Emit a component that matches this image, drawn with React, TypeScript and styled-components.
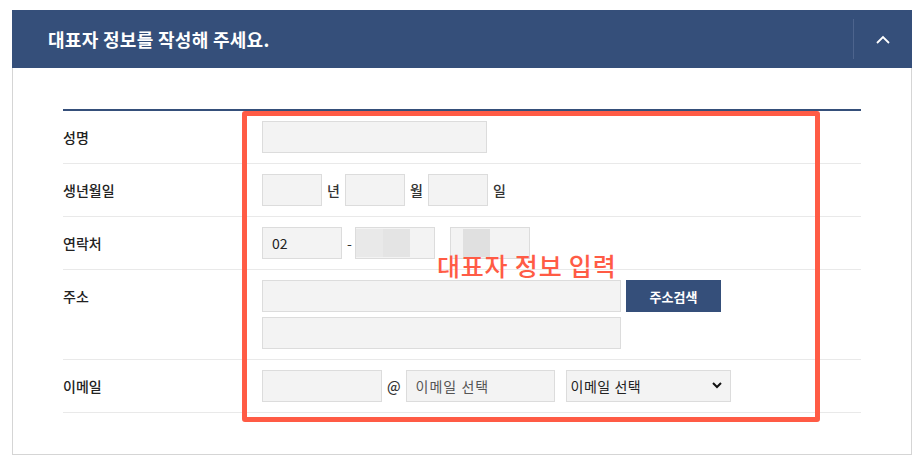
import React from "react";
import styled, { createGlobalStyle } from "styled-components";

const Global = createGlobalStyle`
  html, body { margin: 0; padding: 0; background: #ffffff; }
  body { font-family: "Noto Sans CJK KR", "Noto Sans", sans-serif; color: #333; }
  * { box-sizing: border-box; }
`;

const Page = styled.div`
  padding: 10px 9px 10px 12px;
  width: 921px;
`;

const Card = styled.section`
  width: 900px;
`;

const Header = styled.header`
  height: 58px;
  background: #354f7a;
  display: flex;
  align-items: center;
  padding-left: 36px;
`;

const Title = styled.h2`
  flex: 1;
  margin: 0;
  color: #fff;
  font-size: 18px;
  font-weight: 700;
  letter-spacing: 0.3px;
`;

const Toggle = styled.button`
  width: 59px;
  height: 40px;
  border: none;
  border-left: 1px solid #4d648d;
  background: transparent;
  display: flex;
  align-items: center;
  justify-content: center;
  padding: 0;
`;

const Body = styled.div`
  position: relative;
  border: 1px solid #d5d5d5;
  border-top: none;
  padding: 41px 50px 41px 50px;
`;

const Table = styled.div`
  border-top: 2px solid #354f7a;
`;

const Row = styled.div`
  display: grid;
  grid-template-columns: 199px 1fr;
  padding: 10px 0;
  border-bottom: 1px solid #e9e9e9;
`;

const Label = styled.div`
  align-self: start;
  line-height: 32px;
  font-size: 14px;
  font-weight: 500;
  color: #222;
`;

const Fields = styled.div`
  display: flex;
  flex-direction: column;
  gap: 5px;
`;

const Line = styled.div`
  display: flex;
  align-items: center;
  gap: 5px;
`;

const Input = styled.input<{ $w: number }>`
  width: ${(p) => p.$w}px;
  height: 32px;
  background: #f3f3f3;
  border: 1px solid #dcdcdc;
  padding: 0 9px;
  font-family: "Noto Sans CJK KR", sans-serif;
  font-size: 14px;
  color: #222;
  outline: none;
  &::placeholder { color: #555; letter-spacing: 1px; }
`;

const MaskBox = styled.div<{ $w: number }>`
  width: ${(p) => p.$w}px;
  height: 32px;
  background: #f3f3f3;
  border: 1px solid #dcdcdc;
  display: flex;
  align-items: center;
`;

const Blur = styled.span<{ $w: number; $c: string; $ml?: number }>`
  display: block;
  width: ${(p) => p.$w}px;
  height: 28px;
  margin-left: ${(p) => p.$ml ?? 0}px;
  background: ${(p) => p.$c};
`;

const Unit = styled.span`
  font-size: 14px;
  font-weight: 500;
  color: #333;
  min-width: 13px;
`;

const Dash = styled.span<{ $w: number }>`
  width: ${(p) => p.$w}px;
  font-size: 14px;
  color: #333;
`;

const SearchButton = styled.button`
  width: 95px;
  height: 32px;
  background: #354f7a;
  color: #fff;
  border: none;
  font-family: "Noto Sans CJK KR", sans-serif;
  font-size: 13px;
  font-weight: 700;
`;

const SelectWrap = styled.div`
  position: relative;
  margin-left: 6px;
`;

const Select = styled.select`
  appearance: none;
  width: 165px;
  height: 32px;
  background: #f3f3f3;
  border: 1px solid #dcdcdc;
  padding: 0 4px;
  font-family: "Noto Sans CJK KR", sans-serif;
  font-size: 14px;
  color: #222;
  letter-spacing: 0.5px;
  outline: none;
`;

const Caret = styled.svg`
  position: absolute;
  right: 9px;
  top: 12px;
  pointer-events: none;
`;

const Highlight = styled.div`
  position: absolute;
  left: 229px;
  top: 43px;
  width: 578px;
  height: 311px;
  border: 5px solid #ff5b45;
  border-radius: 3px;
  pointer-events: none;
`;

const Annotation = styled.div`
  position: absolute;
  left: 424px;
  top: 182px;
  font-size: 25px;
  font-weight: 500;
  line-height: 30px;
  color: #ff5b45;
  letter-spacing: 0.8px;
  pointer-events: none;
`;

export default function App() {
  return (
    <Page>
      <Global />
      <Card>
        <Header>
          <Title>대표자 정보를 작성해 주세요.</Title>
          <Toggle aria-label="접기">
            <svg width="14" height="9" viewBox="0 0 14 9">
              <polyline points="1,8 7,2 13,8" fill="none" stroke="#fff" strokeWidth="1.8" />
            </svg>
          </Toggle>
        </Header>
        <Body>
          <Table>
            <Row>
              <Label>성명</Label>
              <Fields>
                <Line>
                  <Input $w={225} />
                </Line>
              </Fields>
            </Row>
            <Row>
              <Label>생년월일</Label>
              <Fields>
                <Line>
                  <Input $w={60} />
                  <Unit>년</Unit>
                  <Input $w={60} />
                  <Unit>월</Unit>
                  <Input $w={60} />
                  <Unit>일</Unit>
                </Line>
              </Fields>
            </Row>
            <Row>
              <Label>연락처</Label>
              <Fields>
                <Line>
                  <Input $w={80} defaultValue="02" />
                  <Dash $w={3}>-</Dash>
                  <MaskBox $w={80}>
                    <Blur $w={27} $c="#e9e9e9" />
                    <Blur $w={27} $c="#e4e4e4" />
                  </MaskBox>
                  <Dash $w={5}></Dash>
                  <MaskBox $w={80}>
                    <Blur $w={27} $c="#e0e0e0" $ml={12} />
                  </MaskBox>
                </Line>
              </Fields>
            </Row>
            <Row>
              <Label>주소</Label>
              <Fields>
                <Line>
                  <Input $w={359} />
                  <SearchButton>주소검색</SearchButton>
                </Line>
                <Line>
                  <Input $w={359} />
                </Line>
              </Fields>
            </Row>
            <Row>
              <Label>이메일</Label>
              <Fields>
                <Line>
                  <Input $w={120} />
                  <Unit>@</Unit>
                  <Input $w={149} placeholder="이메일 선택" />
                  <SelectWrap>
                    <Select defaultValue="">
                      <option value="">이메일 선택</option>
                      <option value="naver.com">naver.com</option>
                      <option value="gmail.com">gmail.com</option>
                    </Select>
                    <Caret width="10" height="7" viewBox="0 0 10 7">
                      <polyline points="1,1 5,5 9,1" fill="none" stroke="#111" strokeWidth="2" />
                    </Caret>
                  </SelectWrap>
                </Line>
              </Fields>
            </Row>
          </Table>
          <Highlight />
          <Annotation>대표자 정보 입력</Annotation>
        </Body>
      </Card>
    </Page>
  );
}
